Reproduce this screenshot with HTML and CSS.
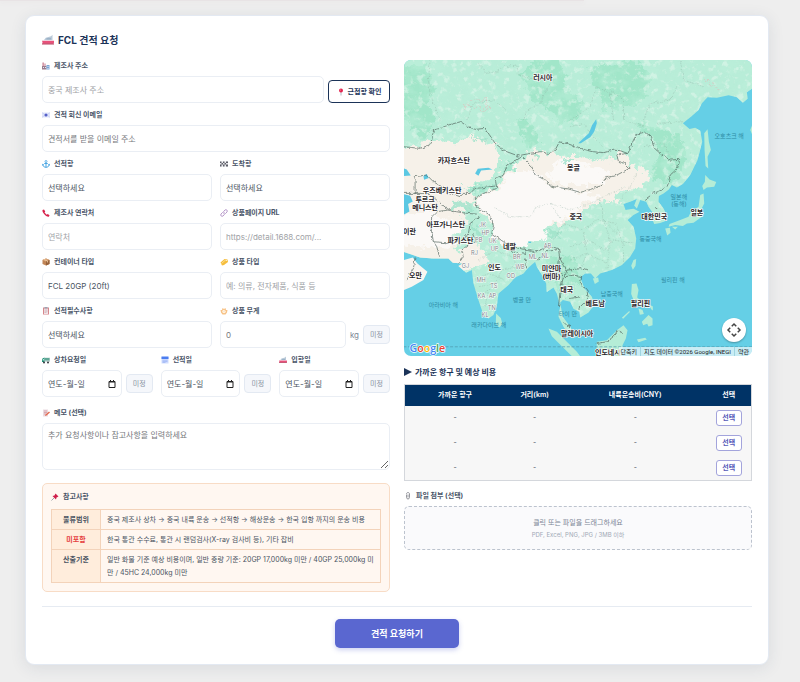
FILE: index.html
```html
<!DOCTYPE html>
<html lang="ko">
<head>
<meta charset="utf-8">
<meta name="viewport" content="width=device-width, initial-scale=1">
<title>FCL 견적 요청</title>
<link rel="stylesheet" href="styles.css">
</head>
<body>
<svg class="sprite" aria-hidden="true">
  <symbol id="i-ship" viewBox="0 0 16 16"><path d="M2 9 5 5l7-2 2-2v8z" fill="#b9c9d8"/><path d="M6 6h6v1H6z" fill="#7f9db8"/><path d="M0 8.500h16v3L14.500 13H1z" fill="#e8517a"/><path d="M0 12.500h16V14H0z" fill="#b9405f"/><path d="M0 8h16v1H0z" fill="#f3e4ec"/></symbol>
  <symbol id="i-factory" viewBox="0 0 16 16"><path d="M1 1h2.500v7H1zM5 3h2v5H5z" fill="#c7788c"/><path d="M0 8h9v7H0z" fill="#9a7c8d"/><path d="M9 6h6v9H9z" fill="#7aa6d8"/><path d="M2 10h2v2H2zM6 10h2v2H6zM11 8h2v2h-2zM11 12h2v2h-2z" fill="#e6e9f4"/></symbol>
  <symbol id="i-mail" viewBox="0 0 16 16"><path d="M0 3h16v10H0z" fill="#dfe4fa"/><path d="m0 3 8 6 8-6M0 13l6-5M16 13l-6-5" stroke="#bcc5ee" fill="none"/><circle cx="8" cy="8" r="3" fill="#5660c8"/></symbol>
  <symbol id="i-anchor" viewBox="0 0 16 16"><path d="M8 5v10M4.500 7h7M1.500 9c.5 4 3 5.500 6.500 5.500s6-1.500 6.500-5.500M0 11l1.500-2.500L4 10.500M16 11l-1.500-2.500-2.500 2" stroke="#3d9fe0" stroke-width="1.800" fill="none"/><circle cx="8" cy="3" r="2" stroke="#3d9fe0" stroke-width="1.500" fill="none"/></symbol>
  <symbol id="i-flag" viewBox="0 0 16 16"><path d="M0 3h16v10H0z" fill="#e4e4e8"/><path d="M0 3h3v3H0zM6 3h3v3H6zM12 3h4v3h-4zM3 6h3v3H3zM9 6h3v3H9zM0 9h3v4H0zM6 9h3v4H6zM12 9h4v4h-4z" fill="#5d5f68"/></symbol>
  <symbol id="i-phone" viewBox="0 0 16 16"><path d="M1 2 4 1l2.500 4L5 7l4.500 4.500 2-1.500L15 12.500 14 15c-2 1-5 0-8-3S0 5 1 2z" fill="#d6224b"/></symbol>
  <symbol id="i-link" viewBox="0 0 16 16"><path d="m7 5 3-3c2.500-2 6 1 4 4l-3 3c-1.500 1.300-3.500 1-4.500 0M9 11l-3 3c-2.500 2-6-1-4-4l3-3c1.500-1.300 3.500-1 4.500 0" fill="none" stroke="#b090c4" stroke-width="1.800"/></symbol>
  <symbol id="i-box" viewBox="0 0 16 16"><path d="m8 1 7 3v8l-7 3-7-3V4z" fill="#c08556"/><path d="m1 4 7 3 7-3-7-3z" fill="#d9a477"/><path d="M8 7v8l7-3V4z" fill="#98623a"/><path d="m4 3 7 3v3" stroke="#f1d2a8" stroke-width="1.500" fill="none"/></symbol>
  <symbol id="i-tag" viewBox="0 0 16 16"><path d="m1 9 8-7 6 1 1 5-8 6-4 1z" fill="#f6bd3c"/><path d="m3 11 8-7" stroke="#fbe08e" stroke-width="2"/><circle cx="12.500" cy="5" r="1.200" fill="#fff"/></symbol>
  <symbol id="i-clip" viewBox="0 0 16 16"><path d="M2 1h12v14H2z" fill="#d6878c"/><path d="M4 3h8v11H4z" fill="#f4e3e6"/><path d="M5 0h6v3H5z" fill="#9aa4b3"/><path d="M5 6h6M5 8.500h6M5 11h4" stroke="#b79ba6"/></symbol>
  <symbol id="i-scale" viewBox="0 0 16 16"><path d="M1 6h3l1-4 3 2 3-2 1 4h3l-1 5-3 4H5l-3-4z" fill="#f7c184"/><circle cx="8" cy="9" r="3.500" fill="#fff4e2"/><path d="m8 9 2-2" stroke="#e58a4a"/></symbol>
  <symbol id="i-truck" viewBox="0 0 16 16"><path d="M5 3h11v9H5z" fill="#cfdcda"/><path d="M1 5 5 3v9H0V8z" fill="#1f8f74"/><path d="M2 6h2v3H1z" fill="#b6e6dd"/><path d="M5 4h10v5H5z" fill="#5fa796"/><circle cx="4" cy="13" r="2" fill="#35383f"/><circle cx="12" cy="13" r="2" fill="#35383f"/></symbol>
  <symbol id="i-cal" viewBox="0 0 16 16"><path d="M1 2h14v13H1z" fill="#cfdcff"/><path d="M1 1h14v5H1z" fill="#4b7df0"/><path d="M3 8.500h10M3 11h10M3 13h6" stroke="#89a5ee"/></symbol>
  <symbol id="i-memo" viewBox="0 0 16 16"><path d="M2 1h10v14H2z" fill="#eadbe0"/><path d="M4 4h6M4 7h6M4 10h4" stroke="#c77784"/><path d="m7 11 7-6 2 2-7 6-3 1z" fill="#e36a4f"/></symbol>
  <symbol id="i-pin" viewBox="0 0 16 16"><path d="M8 7v8" stroke="#99a3b3" stroke-width="1.500"/><circle cx="8" cy="5" r="4" fill="#e3244f"/><circle cx="7" cy="4" r="1.200" fill="#f68ca2"/></symbol>
  <symbol id="i-push" viewBox="0 0 16 16"><path d="m6 10-5 5" stroke="#7f8894" stroke-width="1.500"/><path d="m9 1 6 6-2 1-2 1-1 4-7-7 4-1 1-2z" fill="#cf1f4b"/></symbol>
  <symbol id="i-attach" viewBox="0 0 16 16"><path d="M5 5v6c0 4 6 4 6 0V4c0-4-6-4-6 0M8 5v6" fill="none" stroke="#7f8088" stroke-width="1.600"/></symbol>
</svg>

<div class="previous" aria-hidden="true"></div>

<main class="card">
  <form class="quote">
    <div class="columns">
      <section class="col">
        <h1 class="title"><svg class="icon icon-lg"><use href="#i-ship"/></svg>FCL 견적 요청</h1>

        <div class="fields">
          <div class="field">
            <label class="label" for="addr"><svg class="icon"><use href="#i-factory"/></svg>제조사 주소</label>
            <div class="inline end">
              <input class="control" id="addr" type="text" placeholder="중국 제조사 주소">
              <button class="btn-outline" type="button"><svg class="icon"><use href="#i-pin"/></svg>근접항 확인</button>
            </div>
          </div>
          <div class="field">
            <label class="label" for="email"><svg class="icon"><use href="#i-mail"/></svg>견적 회신 이메일</label>
            <input class="control dim" id="email" type="email" placeholder="견적서를 받을 이메일 주소">
          </div>
          <div class="pair">
            <div class="field">
              <label class="label" for="pol"><svg class="icon"><use href="#i-anchor"/></svg>선적항</label>
              <select class="control" id="pol"><option>선택하세요</option></select>
            </div>
            <div class="field">
              <label class="label" for="pod"><svg class="icon"><use href="#i-flag"/></svg>도착항</label>
              <select class="control" id="pod"><option>선택하세요</option></select>
            </div>
          </div>
          <div class="pair">
            <div class="field">
              <label class="label" for="tel"><svg class="icon"><use href="#i-phone"/></svg>제조사 연락처</label>
              <input class="control" id="tel" type="tel" placeholder="연락처">
            </div>
            <div class="field">
              <label class="label" for="url"><svg class="icon"><use href="#i-link"/></svg>상품페이지 URL</label>
              <input class="control" id="url" type="url" placeholder="https://detail.1688.com/...">
            </div>
          </div>
          <div class="pair">
            <div class="field">
              <label class="label" for="ctype"><svg class="icon"><use href="#i-box"/></svg>컨테이너 타입</label>
              <select class="control" id="ctype"><option>FCL 20GP (20ft)</option></select>
            </div>
            <div class="field">
              <label class="label" for="ptype"><svg class="icon"><use href="#i-tag"/></svg>상품 타입</label>
              <input class="control" id="ptype" type="text" placeholder="예: 의류, 전자제품, 식품 등">
            </div>
          </div>
          <div class="pair">
            <div class="field">
              <label class="label" for="req"><svg class="icon"><use href="#i-clip"/></svg>선적필수사항</label>
              <select class="control" id="req"><option>선택하세요</option></select>
            </div>
            <div class="field">
              <label class="label" for="weight"><svg class="icon"><use href="#i-scale"/></svg>상품 무게</label>
              <div class="inline">
                <input class="control dim" id="weight" type="text" inputmode="numeric" placeholder="0">
                <span class="unit">kg</span>
                <button class="btn-tbd" type="button">미정</button>
              </div>
            </div>
          </div>
          <div class="triple">
            <div class="field">
              <label class="label" for="d1"><svg class="icon"><use href="#i-truck"/></svg>상차요청일</label>
              <div class="inline">
                <div class="control date"><input id="d1" type="text" placeholder="연도-월-일"><svg class="cal" viewBox="0 0 8 8"><path d="M1 1.500h6v6H1zM1 2h6M2.500 0v2M5.500 0v2"/></svg></div>
                <button class="btn-tbd" type="button">미정</button>
              </div>
            </div>
            <div class="field">
              <label class="label" for="d2"><svg class="icon"><use href="#i-cal"/></svg>선적일</label>
              <div class="inline">
                <div class="control date"><input id="d2" type="text" placeholder="연도-월-일"><svg class="cal" viewBox="0 0 8 8"><path d="M1 1.500h6v6H1zM1 2h6M2.500 0v2M5.500 0v2"/></svg></div>
                <button class="btn-tbd" type="button">미정</button>
              </div>
            </div>
            <div class="field">
              <label class="label" for="d3"><svg class="icon"><use href="#i-ship"/></svg>입항일</label>
              <div class="inline">
                <div class="control date"><input id="d3" type="text" placeholder="연도-월-일"><svg class="cal" viewBox="0 0 8 8"><path d="M1 1.500h6v6H1zM1 2h6M2.500 0v2M5.500 0v2"/></svg></div>
                <button class="btn-tbd" type="button">미정</button>
              </div>
            </div>
          </div>
        </div>

        <div class="field memo">
          <label class="label" for="memo"><svg class="icon"><use href="#i-memo"/></svg>메모 (선택)</label>
          <textarea class="control dim" id="memo" placeholder="추가 요청사항이나 참고사항을 입력하세요"></textarea>
        </div>

        <aside class="notes">
          <h2 class="label notes-title"><svg class="icon"><use href="#i-push"/></svg>참고사항</h2>
          <table class="notes-table">
            <tr><th scope="row">물류범위</th><td>중국 제조사 상차 → 중국 내륙 운송 → 선적항 → 해상운송 → 한국 입항 까지의 운송 비용</td></tr>
            <tr><th scope="row" class="excluded">미포함</th><td>한국 통관 수수료, 통관 시 랜덤검사(X-ray 검사비 등), 기타 잡비</td></tr>
            <tr><th scope="row">산출기준</th><td>일반 화물 기준 예상 비용이며, 일반 중량 기준: 20GP 17,000kg 미만 / 40GP 25,000kg 미만 / 45HC 24,000kg 미만</td></tr>
          </table>
        </aside>
      </section>

      <section class="col right">
        <div class="map">
          <svg viewBox="0 0 1047 888" preserveAspectRatio="xMidYMid slice" role="img" aria-label="지도">
            <defs>
              <filter id="mottle" x="0" y="0" width="100%" height="100%">
                <feTurbulence type="fractalNoise" baseFrequency=".018 .024" numOctaves="6" seed="8"/>
                <feColorMatrix values="0 0 0 0 .5  0 0 0 0 .86  0 0 0 0 .7  4 0 0 0 -1.700"/>
              </filter>
              <filter id="speck" x="0" y="0" width="100%" height="100%">
                <feTurbulence type="fractalNoise" baseFrequency=".05" numOctaves="4" seed="21"/>
                <feColorMatrix values="0 0 0 0 .84  0 0 0 0 .95  0 0 0 0 .88  5 0 0 0 -2.700"/>
              </filter>
              <filter id="rough" x="-5%" y="-5%" width="110%" height="110%">
                <feTurbulence type="fractalNoise" baseFrequency=".05" numOctaves="4" seed="3"/>
                <feDisplacementMap in="SourceGraphic" scale="44" xChannelSelector="R" yChannelSelector="G"/>
              </filter>
              <filter id="jag" x="-5%" y="-5%" width="110%" height="110%">
                <feTurbulence type="fractalNoise" baseFrequency=".09" numOctaves="2" seed="5"/>
                <feDisplacementMap in="SourceGraphic" scale="12" xChannelSelector="R" yChannelSelector="G"/>
              </filter>
              <path id="mainland" d="M0 0H1047V85L1030 97 1032 116 1018 128 1000 112 975 106 940 113 912 112 895 130 885 150 862 170 838 190 858 207 875 203 890 212 896 245 882 300 860 345 838 372 820 382 805 375 796 388 780 400 766 408 765 425 780 445 790 466 788 482 770 489 752 492 745 474 748 458 735 440 728 425 710 420 700 445 692 436 700 416 682 424 660 432 666 450 690 446 708 455 690 465 672 480 690 500 698 535 695 565 680 590 655 615 625 630 590 640 575 655 562 640 545 640 530 652 543 685 565 710 572 735 555 757 530 772 528 755 510 746 500 725 478 720 470 728 478 770 500 800 517 832 500 828 480 800 465 770 470 740 460 700 450 682 430 696 428 670 415 645 400 620 395 605 372 625 360 640 335 652 315 675 285 700 280 740 270 765 255 775 240 765 225 720 210 670 205 630 188 638 165 618 178 610 148 608 135 595 90 595 50 592 0 575Z"/>
              <clipPath id="land"><use href="#mainland"/></clipPath>
            </defs>
            <path fill="#65cfe6" d="M0 0H1047V888H0z"/>
            <use href="#mainland" fill="#b8edd8"/>
            <g clip-path="url(#land)">
              <g fill="#8fe0be" opacity=".55" filter="url(#rough)">
                <path d="M0 20 70 10 95 90 70 130 100 190 60 240 0 170zM380 0h90l20 90 50 40-20 50-50 10-30-50-50-20-40-70zM560 20l130-20 60 60-40 70-110 20zM700 190l120 30 40 60-50 90-70-20 30-80zM340 170l50 20 20 60-40 20zM420 590l90 0 30 60-50 60-40-40z"/>
              </g>
              <path filter="url(#mottle)" opacity=".5" d="M0 0h1047v888H0z"/>
              <path filter="url(#speck)" opacity=".45" d="M0 0h1047v888H0z"/>
              <g filter="url(#rough)">
                <path fill="#f6f1e9" d="M-20 268 40 258 95 240 150 250 215 226 262 248 295 280 270 350 190 385 215 410 205 440 175 445 190 480 150 540 170 575 205 545 250 580 255 605 200 625 150 625-20 610z"/>
                <path fill="#f6f1e9" d="M362 295 400 262 455 285 520 285 580 300 640 295 645 272 675 285 665 315 720 325 738 365 700 390 650 385 640 425 595 420 550 440 520 465 480 490 425 500 425 530 350 560 300 560 268 530 265 500 225 450 215 415 280 385 310 335z"/>
                <path fill="#fbf9f7" d="M330 320 380 330 450 385 530 395 600 410 540 430 500 470 430 495 425 540 350 560 300 555 270 520 268 490 230 450 225 415 290 385z"/>
                <path fill="#fbf9f7" d="M470 290 560 320 620 340 580 375 480 375 430 350zM-20 470 80 450 170 500 140 570-20 550z"/>
              </g>
              <g fill="#9fe3ca" opacity=".8" filter="url(#rough)">
                <path d="M175 385 250 375 280 380 220 395zM150 425l60 5-10 25-45-10zM290 330l25-20 25-5-10 20zM380 290l20-5 10 20zM470 300l30-5 20 10-20 5zM200 490l30 10 10 30-20-5zM420 520l50-10 0 20zM205 235l30-5 20 20z"/>
              </g>
              <path d="M578 178 566 195 556 220 524 250 532 250 560 232 572 215 580 190zM215 340l8-14 32-3 12 5-34 3-8 16zM60 348l10-6 6 12-14 5zM0 325l10 3 12 18-22 2zM0 402l20 5 8 17-14 8 4 22-18 10zM375 545h8v4h-8z" fill="#5bc8e3"/>
              <g fill="none" stroke="#e6b6b8" stroke-width="2" opacity=".8" filter="url(#rough)"><path d="M180 145l25-25 40 0 15 20-30 10-20-15zM890 50l20 5 10 20 20 10"/></g>
            </g>
            <g fill="#b5edd7">
              <path d="M902 220 912 208 916 245 922 270 912 290 914 325 906 318 903 270zM905 345 918 358 938 366 932 380 910 382 900 390 896 378 904 365zM890 405 900 400 902 430 892 450 895 470 870 488 850 490 838 498 815 495 795 500 798 492 830 480 855 470 862 455 885 440zM785 505l14-2 2 15-10 8zM805 500l18 0-8 8zM690 600l8-3-2 20-8 12-5-12zM568 655l16-3 2 12-12 8zM685 672l14-2 6 20-4 22 14 12-4 6-20-8-8-20zM715 785l20-20 12 10 0 20-12 4-4-8-12 4zM705 745l12 5 4 12-12 2zM740 735l8 4 0 12-6-4zM655 773l22-20 2 3-20 20zM278 760l14 14 5 18-10 10-10-12zM435 805l25 10 30 30 30 30 10 13-25 0-30-30-30-30zM580 845l30-5 30-30 20-15 12 15-5 25-10 20 0 33-70 0-8-20zM700 838l25-5 5 5-25 8zM1040 210l7-18v35z"/>
            </g>
            <path fill="#f8f5f0" d="M0 600 28 592 42 610 72 635 60 660 25 680 0 690z"/>
            <g class="regions" filter="url(#jag)">
              <path d="M80 0 75 60 80 100 110 180M225 10 250 40 280 35 300 20 340 15 345 45 400 60M190 180l20-50 60-10 40 30M360 180l10-30 40-20 30-60M500 180l60-40 20-60 40 20 10 80M620 90l40 30 0 60 60 20M720 180l20-50 60-10 20-40M760 190l80-5M830 0l10 60 60 20M500 200l40-10 20 30 40 40M720 260l60-10 20 40"/>
              <path d="M270 440l50 30 60 0 20-30 40-10 60 20 60-20 60-30 50-20M440 430l40 60-30 50M480 490l60 20 40-30 60 10M500 560l60-20 40 30 30-30 60 10M500 600l50-20 60 30M540 520l10 60-20 50M600 480l20 60-10 90M640 500l20 60 0 50M590 420l10 60 40 40M700 340l-20 40-30 40M225 600l50-30 50 20 20 30-50 10-20 40-50 10M215 660l40-20 50 20M235 700l40-20M245 740l10-50"/>
            </g>
            <g class="borders" filter="url(#jag)">
              <path d="M0 260 20 262 50 265 75 258 85 240 90 210 110 205 135 195 172 185 190 198 215 208 245 205 275 250 290 262 310 275 345 288 355 285 380 280 410 275 435 280 455 270 468 245 490 250 530 265 570 275 600 278 630 270 650 272 672 280 690 240 700 222 725 216 745 232 750 262 775 285 800 300 828 298 822 325 800 345 792 378 775 390 750 400 725 418"/>
              <path d="M672 280 640 285 645 305 665 310 680 324 640 345 605 355 590 378 555 390 530 397 500 388 440 378 430 362 395 345 385 320 355 290 340 300 310 318 300 345 275 355 280 385 240 400 215 415 220 440 260 465 270 495 265 520 300 545 345 565 400 572 440 560 465 565 468 590 490 630 540 625 552 630"/>
              <path d="M35 402 35 350 70 345 90 365 115 380 130 395 170 410 180 400 200 400 215 385 245 382 275 378M0 400 30 400 75 400 100 420 130 445 150 455M85 470 100 455 130 450 160 455 190 460 220 462M85 470 82 500 90 545 100 560 108 590M90 545 130 548 175 545 195 520 200 490 230 470M165 610 180 590 175 570 200 550 220 545 210 520M300 560 340 580 365 582 370 570 400 580M365 595 370 625M400 600 415 590 430 575 460 568M35 592 30 625 10 660M468 590 465 630 480 650 470 690 465 740M490 630 485 650 510 645 535 650 530 670 550 690 555 715 525 745M500 715 530 710M480 790 500 800M752 440 765 450M580 850 610 845 635 825 640 812 658 818"/>
            </g>
            <path d="M0 860H1047" stroke="#4b93a6" stroke-width="2" stroke-dasharray="9 5"/>
            <g class="states">
              <text x="237" y="500">JK</text><text x="246" y="525">HP</text><text x="226" y="545">PB</text><text x="267" y="548">UK</text><text x="274" y="573">UP</text><text x="213" y="586">RJ</text><text x="340" y="598">BR</text><text x="388" y="597">ML</text><text x="425" y="595">NL</text><text x="432" y="565">AR</text><text x="350" y="626">WB</text><text x="186" y="624">GJ</text><text x="322" y="655">OD</text><text x="233" y="666">MH</text><text x="271" y="684">TS</text><text x="234" y="715">KA</text><text x="267" y="715">AP</text><text x="265" y="749">TN</text><text x="245" y="771">KL</text>
            </g>
            <g class="seas">
              <text x="977" y="234">오호츠크 해</text><text x="826" y="416">일본해</text><text x="826" y="437">(동해)</text><text x="741" y="543">동중국해</text><text x="808" y="665">필리핀 해</text><text x="625" y="708">남중국해</text><text x="355" y="727">벵골 만</text><text x="493" y="767">타이 만</text><text x="120" y="741">아라비아 해</text><text x="256" y="802">래카다이브 해</text>
            </g>
            <g class="countries">
              <text x="418" y="59">러시아</text><text x="151" y="310">카자흐스탄</text><text x="510" y="331">몽골</text><text x="116" y="398">우즈베키스탄</text><text x="65" y="426">투르크</text><text x="65" y="451">메니스탄</text><text x="517" y="476">중국</text><text x="752" y="476">대한민국</text><text x="880" y="466">일본</text><text x="127" y="502">아프가니스탄</text><text x="18" y="522">이란</text><text x="171" y="549">파키스탄</text><text x="318" y="568">네팔</text><text x="273" y="629">인도</text><text x="444" y="632">미얀마</text><text x="444" y="657">(버마)</text><text x="36" y="653">오만</text><text x="490" y="697">태국</text><text x="575" y="739">베트남</text><text x="711" y="739">필리핀</text><text x="521" y="827">말레이시아</text><text x="613" y="884">인도네시</text>
            </g>
            <text class="logo" x="18" y="876"><tspan fill="#4285f4">G</tspan><tspan fill="#ea4335">o</tspan><tspan fill="#fbbc05">o</tspan><tspan fill="#4285f4">g</tspan><tspan fill="#34a853">l</tspan><tspan fill="#ea4335">e</tspan></text>
          </svg>
          <button class="map-move" type="button" aria-label="지도 이동"><svg viewBox="0 0 24 24"><path d="m9 7 3-3 3 3M9 17l3 3 3-3M7 9l-3 3 3 3M17 9l3 3-3 3"/></svg></button>
          <div class="map-credit"><span>단축키</span><span>지도 데이터 ©2026 Google, INEGI</span><a href="#">약관</a></div>
        </div>

        <h2 class="subtitle"><svg class="play" viewBox="0 0 8 8"><path d="M0 0l8 4-8 4z"/></svg>가까운 항구 및 예상 비용</h2>
        <table class="ports">
          <colgroup><col class="c-port"><col class="c-dist"><col class="c-cost"><col class="c-pick"></colgroup>
          <thead><tr><th>가까운 항구</th><th>거리(km)</th><th>내륙운송비(CNY)</th><th>선택</th></tr></thead>
          <tbody>
            <tr><td>-</td><td>-</td><td>-</td><td><button class="btn-pick" type="button">선택</button></td></tr>
            <tr><td>-</td><td>-</td><td>-</td><td><button class="btn-pick" type="button">선택</button></td></tr>
            <tr><td>-</td><td>-</td><td>-</td><td><button class="btn-pick" type="button">선택</button></td></tr>
          </tbody>
        </table>

        <h2 class="label attach"><svg class="icon"><use href="#i-attach"/></svg>파일 첨부 (선택)</h2>
        <button class="drop" type="button"><span>클릭 또는 파일을 드래그하세요</span><small>PDF, Excel, PNG, JPG / 3MB 이하</small></button>
      </section>
    </div>

    <div class="actions"><button class="submit" type="submit">견적 요청하기</button></div>
  </form>
</main>
</body>
</html>
```
FILE: styles.css
```css
* { box-sizing: border-box; }

body {
  margin: 0;
  background: #eeeeee;
  color: #4a5462;
  font-family: Inter, "Noto Sans CJK KR", sans-serif;
  font-size: 8px;
  line-height: 12px;
}

button, input, select, textarea { font: inherit; color: inherit; margin: 0; }
button { cursor: pointer; }
h1, h2 { margin: 0; }

.sprite { display: none; }

.previous {
  width: 73%;
  height: 1px;
  margin-bottom: 14px;
  background: #e8e3e5;
  box-shadow: 0 1px 5px #e0dadd;
}

.card {
  margin: 0 31px 18px 25px;
  padding: 17px 16px 16px;
  background: #ffffff;
  border: 1px solid #e3e9f2;
  border-radius: 9px;
  box-shadow: 0 3px 16px rgba(40, 60, 90, 0.1);
}

.columns {
  display: grid;
  grid-template-columns: 1fr 1fr;
  gap: 14px;
}
.col { min-width: 0; }
.right { padding-top: 27px; }

.title {
  display: flex;
  align-items: center;
  gap: 4px;
  height: 14px;
  margin-bottom: 14px;
  color: #1b3358;
  font-size: 10px;
  line-height: 14px;
  font-weight: 700;
}

.icon { width: 8px; height: 8px; flex: none; }
.icon-lg { width: 12px; height: 12px; }

.label {
  display: flex;
  align-items: center;
  gap: 4px;
  margin-bottom: 5px;
  font-size: 7px;
  line-height: 10px;
  font-weight: 700;
  color: #4a5568;
}

.fields { display: flex; flex-direction: column; gap: 7px; }
.pair { display: grid; grid-template-columns: 1fr 1fr; gap: 8px; }
.triple { display: grid; grid-template-columns: 1fr 1fr 1fr; gap: 8px; }
.inline { display: flex; align-items: center; gap: 4px; }
.inline.end { align-items: flex-end; }

.control {
  display: block;
  width: 100%;
  min-width: 0;
  height: 27px;
  padding: 0 5px;
  border: 1px solid #eaeef4;
  border-radius: 5px;
  background: #ffffff;
  outline: none;
  appearance: none;
}
.control::placeholder { color: #a0a2a6; opacity: 1; }
.control.dim::placeholder { color: #76787c; }

.date { display: flex; align-items: center; justify-content: space-between; }
.date input {
  flex: 1;
  min-width: 0;
  width: 100%;
  padding: 0;
  border: 0;
  outline: none;
  background: transparent;
}
.date input::placeholder { color: #4a5462; opacity: 1; }
.cal { width: 8px; height: 8px; flex: none; fill: none; stroke: #222222; }

.unit { flex: none; color: #7d8896; }

.btn-tbd {
  flex: none;
  width: 27px;
  height: 19px;
  padding: 0;
  border: 1px solid #e3e9f2;
  border-radius: 4px;
  background: #f5f7fb;
  color: #8892a2;
  font-size: 7px;
}

.btn-outline {
  flex: none;
  display: flex;
  align-items: center;
  justify-content: center;
  gap: 3px;
  width: 62px;
  height: 23px;
  padding: 0;
  border: 1px solid #1b3358;
  border-radius: 4px;
  background: #ffffff;
  color: #1b3358;
  font-size: 7px;
  font-weight: 700;
  white-space: nowrap;
}

.memo { margin-top: 11px; }
textarea.control { height: 47px; padding: 5px; resize: vertical; }

.notes {
  margin-top: 13px;
  padding: 8px;
  border: 1px solid #f8dcc6;
  border-radius: 5px;
  background: #fff7f1;
}
.notes-title { margin-bottom: 7px; }
.notes-table {
  width: 100%;
  border-collapse: collapse;
  font-size: 7px;
  line-height: 13px;
}
.notes-table th, .notes-table td {
  padding: 3px 2px 3px 6px;
  border: 1px solid #f3d3ba;
  vertical-align: top;
}
.notes-table th {
  width: 49px;
  padding: 3px 2px;
  background: #ffeddc;
  text-align: center;
  font-weight: 700;
  white-space: nowrap;
}
.notes-table td { word-break: break-all; }
.notes-table .excluded { color: #e53e3e; }

.map {
  position: relative;
  overflow: hidden;
  aspect-ratio: 349 / 297;
  border-radius: 7px;
}
.map > svg { display: block; width: 100%; height: 100%; }
.map text { text-anchor: middle; paint-order: stroke; stroke-linejoin: round; }
.countries { font-size: 21px; font-weight: 700; fill: #1f2326; stroke: #ffffff; stroke-width: 4px; }
.seas { font-size: 18px; fill: #2d8ba4; }
.states { font-size: 17px; fill: #7b7f86; stroke: #ffffff; stroke-width: 3px; }
.map .logo {
  font-family: "Open Sans", sans-serif;
  font-size: 32px;
  font-weight: 600;
  text-anchor: start;
  stroke: #ffffff;
  stroke-width: 4px;
}
.borders { fill: none; stroke: #50605b; stroke-width: 2px; stroke-linejoin: round; }
.regions { fill: none; stroke: #8aa79c; stroke-width: 1px; stroke-dasharray: 5 3; }

.map-move {
  position: absolute;
  right: 6px;
  bottom: 14px;
  width: 24px;
  height: 24px;
  padding: 3px;
  border: 0;
  border-radius: 50%;
  background: #ffffff;
  box-shadow: 0 1px 2px rgba(0, 0, 0, 0.3);
}
.map-move svg { display: block; width: 18px; height: 18px; fill: none; stroke: #444444; stroke-width: 2px; }
.map-credit {
  position: absolute;
  right: 0;
  bottom: 0;
  display: flex;
  font-family: Roboto, "Noto Sans CJK KR", sans-serif;
  font-size: 6px;
  line-height: 9px;
  color: #222222;
  white-space: nowrap;
}
.map-credit > * {
  padding: 0 3px;
  background: rgba(235, 247, 250, 0.75);
  border-left: 1px solid #9fd5e0;
  color: inherit;
  text-decoration: none;
}
.map-credit > :first-child { border-left: 0; padding-left: 1px; }

.subtitle {
  display: flex;
  align-items: center;
  gap: 3px;
  margin: 10px 0 6px;
  color: #1b3358;
  font-size: 8px;
  line-height: 12px;
  font-weight: 700;
}
.play { width: 8px; height: 8px; fill: #1b3358; }

.ports {
  width: 100%;
  table-layout: fixed;
  border-collapse: collapse;
  border: 1px solid #d4d7dc;
  background: #f7f7f7;
  font-size: 7px;
  line-height: 10px;
  text-align: center;
}
.c-port { width: 29%; }
.c-dist { width: 17%; }
.c-cost { width: 41%; }
.c-pick { width: 13%; }
.ports th { height: 21px; padding: 0; background: #003366; color: #ffffff; font-weight: 600; }
.ports td { height: 25px; padding: 0; }
.btn-pick {
  width: 26px;
  height: 16px;
  padding: 0;
  border: 1px solid #a3a4dc;
  border-radius: 3px;
  background: #ffffff;
  color: #5558b8;
  font-weight: 600;
  line-height: 10px;
}

.attach { margin: 10px 0 5px; }
.drop {
  display: flex;
  flex-direction: column;
  align-items: center;
  justify-content: center;
  gap: 2px;
  width: 100%;
  height: 44px;
  border: 1px dashed #bcc3ce;
  border-radius: 5px;
  background: #fafafc;
  color: #7b8595;
  font-size: 7px;
  line-height: 11px;
}
.drop small { font-size: 6px; line-height: 10px; color: #a1a9b6; }

.actions {
  display: flex;
  justify-content: center;
  margin-top: 14px;
  padding-top: 12px;
  border-top: 1px solid #e6ebf2;
}
.submit {
  width: 124px;
  height: 29px;
  border: 0;
  border-radius: 5px;
  background: #5a67d0;
  color: #ffffff;
  font-size: 9px;
  font-weight: 700;
  box-shadow: 0 2px 5px rgba(90, 103, 208, 0.3);
}
```
